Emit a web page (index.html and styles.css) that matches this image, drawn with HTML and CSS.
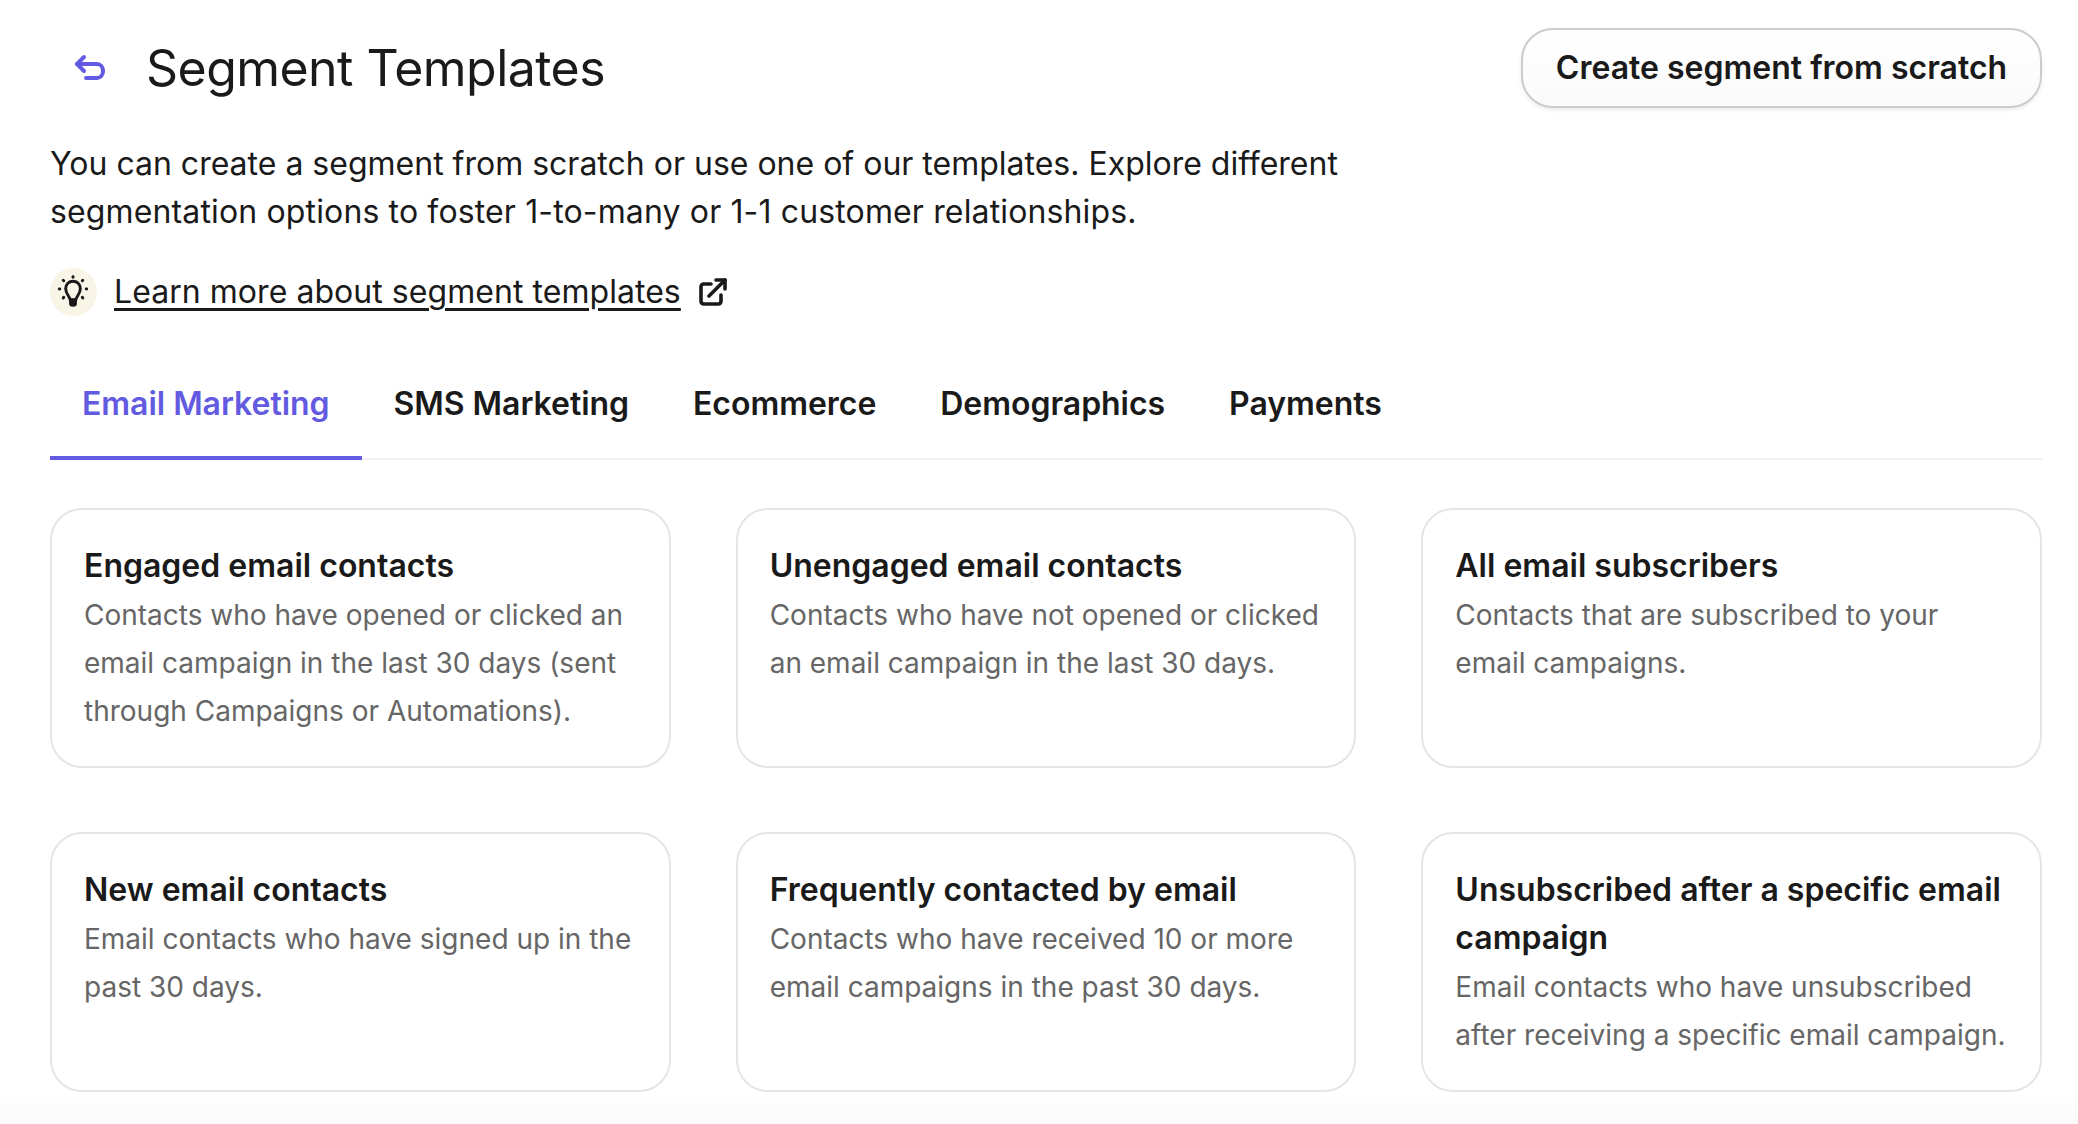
FILE: index.html
```html
<!DOCTYPE html>
<html lang="en">
<head>
    <title>Segment Templates</title>
    <link rel="stylesheet" href="styles.css">
</head>
<body>
    <header class="page-header">
        <div class="title-wrap">
            <a href="#" class="back-link">
                <svg width="32" height="32" viewBox="0 0 32 32" fill="none" stroke="#625ae0" stroke-width="4" stroke-linecap="round" stroke-linejoin="round">
                    <path d="M10 7 L3 14 L10 21"/>
                    <path d="M3 14 H23 C26.5 14 29 17 29 21 C29 25 26.5 28 23 28 H12"/>
                </svg>
            </a>
            <h1>Segment Templates</h1>
        </div>
        <button class="btn-create">Create segment from scratch</button>
    </header>

    <p class="intro">You can create a segment from scratch or use one of our templates. Explore different<br><span class="intro-second">segmentation options to foster 1-to-many or 1-1 customer relationships.</span></p>

    <div class="learn-more">
        <span class="bulb">
            <svg width="48" height="48" viewBox="0 0 48 48" fill="none" stroke="#1a1a1a" stroke-width="3" stroke-linecap="round" stroke-linejoin="round">
                <path d="M20.5 32 C20.5 28.5 16 26.5 16 20.5 C16 16 19.4 13 23.5 13 C27.6 13 31 16 31 20.5 C31 26.5 26.5 28.5 26.5 32 Z"/>
                <path d="M20.5 32 V36 C20.5 37.5 21.5 38 23.5 38 C25.5 38 26.5 37.5 26.5 36 V32 Z" fill="#1a1a1a" stroke-width="2"/>
                <path d="M23.5 8.5 V9"/>
                <path d="M13.5 12 L14 12.5"/>
                <path d="M33.5 12 L33 12.5"/>
                <path d="M9.5 21 H10"/>
                <path d="M37 21 H37.5"/>
                <path d="M13.5 30 L14 29.5"/>
                <path d="M33.5 30 L33 29.5"/>
            </svg>
        </span>
        <a href="#" class="learn-link">Learn more about segment templates</a>
        <svg class="ext-icon" width="28" height="28" viewBox="0 0 28 28" fill="none" stroke="#1a1a1a" stroke-width="3.6" stroke-linecap="round" stroke-linejoin="round">
            <path d="M12 6 H5 C3 6 2 7 2 9 V23 C2 25 3 26 5 26 H19 C21 26 22 25 22 23 V17"/>
            <path d="M10 18 L26 2"/>
            <path d="M17 2 H26 V11"/>
        </svg>
    </div>

    <nav class="tabs">
        <a href="#" class="tab active">Email Marketing</a>
        <a href="#" class="tab">SMS Marketing</a>
        <a href="#" class="tab">Ecommerce</a>
        <a href="#" class="tab">Demographics</a>
        <a href="#" class="tab">Payments</a>
    </nav>

    <section class="cards">
        <div class="card">
            <h3>Engaged email contacts</h3>
            <p>Contacts who have opened or clicked an email campaign in the last 30 days (sent through Campaigns or Automations).</p>
        </div>
        <div class="card">
            <h3>Unengaged email contacts</h3>
            <p>Contacts who have not opened or clicked an email campaign in the last 30 days.</p>
        </div>
        <div class="card">
            <h3>All email subscribers</h3>
            <p>Contacts that are subscribed to your email campaigns.</p>
        </div>
        <div class="card">
            <h3>New email contacts</h3>
            <p>Email contacts who have signed up in the past 30 days.</p>
        </div>
        <div class="card">
            <h3>Frequently contacted by email</h3>
            <p>Contacts who have received 10 or more email campaigns in the past 30 days.</p>
        </div>
        <div class="card">
            <h3>Unsubscribed after a specific email campaign</h3>
            <p>Email contacts who have unsubscribed after receiving a specific email campaign.</p>
        </div>
    </section>
</body>
</html>
```

FILE: styles.css
```css
* {
    margin: 0;
    padding: 0;
    box-sizing: border-box;
    font-family: Inter, "Liberation Sans", sans-serif;
}
html {
    height: 100%;
}
body {
    min-height: 100%;
    padding: 28px 36px 32px 50px;
    color: #1a1a1a;
    background: linear-gradient(to bottom, #fff calc(100% - 30px), #fafafa);
}
.page-header {
    display: flex;
    align-items: center;
    justify-content: space-between;
    height: 80px;
}
.title-wrap {
    display: flex;
    align-items: center;
}
.back-link {
    display: flex;
    margin-left: 24px;
    margin-right: 40px;
    margin-bottom: 4px;
}
h1 {
    font-size: 50px;
    line-height: 64px;
    font-weight: 425;
    letter-spacing: -0.55px;
}
.btn-create {
    width: 521px;
    height: 80px;
    padding-bottom: 2px;
    font-size: 32px;
    font-weight: 600;
    color: #1a1a1a;
    background: linear-gradient(to bottom, #fff, #fafafa);
    border: 2px solid #ccc;
    border-radius: 32px;
    box-shadow: 0 2px 4px rgba(0, 0, 0, 0.08);
    cursor: pointer;
}
.intro {
    margin-top: 32px;
    font-size: 32px;
    line-height: 48px;
}
.intro-second {
    letter-spacing: 0.14px;
}
.learn-more {
    display: flex;
    align-items: center;
    margin-top: 32px;
}
.bulb {
    display: flex;
    width: 47px;
    height: 48px;
    border-radius: 50%;
    background-color: #f8f4e6;
    margin-right: 17px;
}
.learn-link {
    font-size: 32px;
    line-height: 48px;
    letter-spacing: 0.05px;
    color: #1a1a1a;
    text-decoration: underline;
    text-decoration-thickness: 3px;
    text-underline-offset: 5px;
}
.ext-icon {
    margin-left: 18px;
}
.tabs {
    display: flex;
    margin-top: 64px;
    border-bottom: 2px solid #f0f0f0;
}
.tab {
    padding: 0 32px 28px;
    margin-bottom: -2px;
    font-size: 32px;
    line-height: 48px;
    font-weight: 600;
    letter-spacing: -0.04px;
    color: #1a1a1a;
    text-decoration: none;
    border-bottom: 4px solid transparent;
}
.tab.active {
    color: #625ae0;
    border-bottom-color: #625ae0;
}
.cards {
    display: grid;
    grid-template-columns: repeat(3, 1fr);
    gap: 64px 65px;
    margin-top: 48px;
}
.card {
    height: 260px;
    padding: 32px 31px 32px 32px;
    background-color: #fff;
    border: 2px solid #e5e5e5;
    border-radius: 32px;
}
.card h3 {
    font-size: 32px;
    line-height: 48px;
    font-weight: 600;
    margin-bottom: 1px;
}
.card p {
    font-size: 28px;
    line-height: 48px;
    color: #666;
}
```
